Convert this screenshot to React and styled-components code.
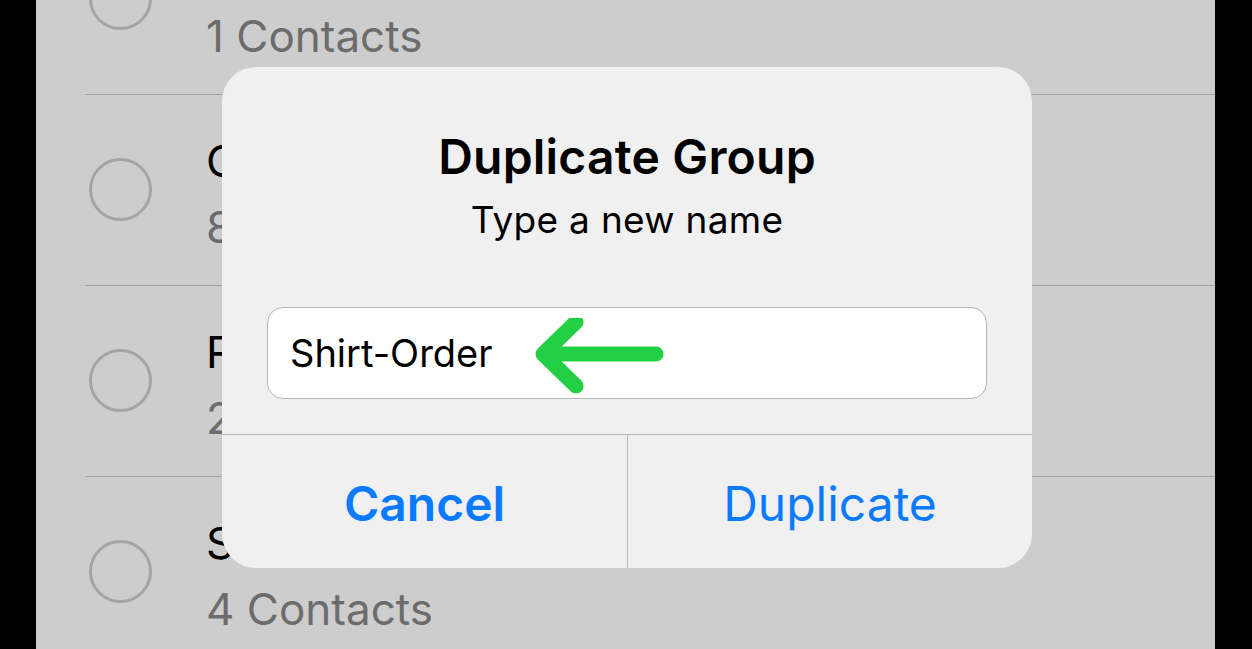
import React from 'react';
import styled, { createGlobalStyle } from 'styled-components';

const GlobalStyle = createGlobalStyle`
  html, body {
    margin: 0;
    padding: 0;
    background: #000;
    overflow: hidden;
  }
  body {
    font-family: Inter, "Noto Sans", "Liberation Sans", sans-serif;
  }
`;

const groups = [
  { name: 'Work', count: 1 },
  { name: 'Customers', count: 8 },
  { name: 'Relatives', count: 2 },
  { name: 'Shirt-Order', count: 4 },
];

const App = () => {
  return (
    <>
      <GlobalStyle />
      <Frame>
        <Screen>
          <List>
            {groups.map((g) => (
              <Row key={g.name}>
                <Radio />
                <RowText>
                  <RowTitle>{g.name}</RowTitle>
                  <RowSub>{g.count} Contacts</RowSub>
                </RowText>
              </Row>
            ))}
          </List>

          <Alert>
            <AlertBody>
              <AlertTitle>Duplicate Group</AlertTitle>
              <AlertMessage>Type a new name</AlertMessage>
              <Field>
                <FieldText>Shirt-Order</FieldText>
                <Arrow viewBox="0 0 140 90" aria-hidden="true">
                  <path
                    d="M121 36 H8 M41 4 L8 36 L41 68"
                    fill="none"
                    stroke="#23cf45"
                    strokeWidth="15"
                    strokeLinecap="round"
                    strokeLinejoin="round"
                  />
                </Arrow>
              </Field>
            </AlertBody>
            <Actions>
              <ActionButton $bold>Cancel</ActionButton>
              <ActionButton>Duplicate</ActionButton>
            </Actions>
          </Alert>
        </Screen>
      </Frame>
    </>
  );
};

export default App;

const Frame = styled.div`
  display: flex;
  width: 1252px;
  height: 649px;
  padding: 0 37px 0 36px;
  box-sizing: border-box;
  background: #000;
`;

const Screen = styled.div`
  position: relative;
  flex: 1;
  background: #cdcdcd;
  overflow: hidden;
`;

const List = styled.div`
  display: flex;
  flex-direction: column;
  margin-top: -96px;
`;

const Row = styled.div`
  display: flex;
  align-items: flex-start;
  height: 190px;
  margin-left: 49px;
  border-bottom: 1px solid #a2a2a2;
`;

const Radio = styled.div`
  width: 57px;
  height: 57px;
  border: 3.5px solid #a4a4a4;
  border-radius: 50%;
  margin: 63px 0 0 4px;
  flex-shrink: 0;
`;

const RowText = styled.div`
  display: flex;
  flex-direction: column;
  margin-left: 54px;
  padding-top: 35px;
`;

const RowTitle = styled.div`
  font-size: 44px;
  line-height: 62px;
  color: #000;
`;

const RowSub = styled.div`
  font-size: 44px;
  line-height: 62px;
  margin-top: 4px;
  color: #6c6c6c;
`;

const Alert = styled.div`
  position: absolute;
  left: 186px;
  top: 67px;
  width: 810px;
  height: 501px;
  display: flex;
  flex-direction: column;
  background: #f0f0f0;
  border-radius: 34px;
  overflow: hidden;
`;

const AlertBody = styled.div`
  display: flex;
  flex-direction: column;
  align-items: center;
  padding: 62px 45px 0;
  height: 368px;
  box-sizing: border-box;
  border-bottom: 1px solid #b6b6b6;
`;

const AlertTitle = styled.div`
  font-size: 48px;
  font-weight: 600;
  line-height: 56px;
  color: #000;
  letter-spacing: 0.2px;
`;

const AlertMessage = styled.div`
  font-size: 37px;
  line-height: 46px;
  margin-top: 12px;
  color: #000;
  letter-spacing: 0.3px;
`;

const Field = styled.div`
  position: relative;
  align-self: stretch;
  display: flex;
  align-items: center;
  height: 92px;
  margin-top: 64px;
  padding: 0 22px;
  background: #fff;
  border: 1px solid #b4b4b4;
  border-radius: 16px;
  box-sizing: border-box;
`;

const FieldText = styled.span`
  font-size: 38px;
  color: #000;
`;

const Arrow = styled.svg`
  position: absolute;
  left: 267px;
  top: 10px;
  width: 140px;
  height: 90px;
`;

const Actions = styled.div`
  flex: 1;
  display: grid;
  grid-template-columns: 405px 1fr;
`;

const ActionButton = styled.button`
  display: flex;
  align-items: center;
  justify-content: center;
  padding: 4px 0 0;
  border: none;
  background: transparent;
  font-family: inherit;
  font-size: 48px;
  font-weight: ${(p) => (p.$bold ? 600 : 400)};
  color: #0a7aff;
  & + & {
    border-left: 1px solid #b6b6b6;
  }
`;
